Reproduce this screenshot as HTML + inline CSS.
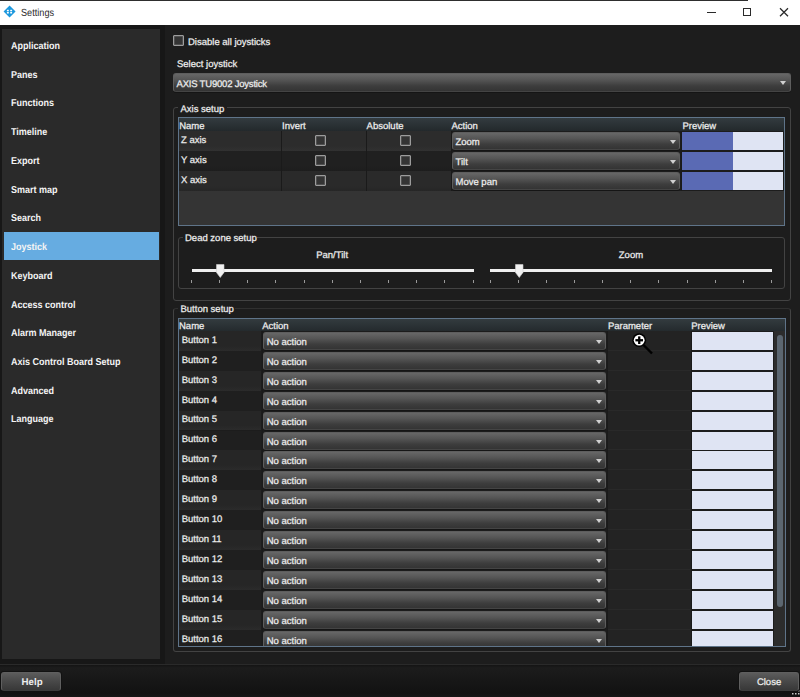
<!DOCTYPE html><html><head><meta charset="utf-8"><title>Settings</title><style>
*{margin:0;padding:0;box-sizing:border-box}
html,body{width:800px;height:697px;overflow:hidden;background:#1d1d1d;font-family:"Liberation Sans",sans-serif;text-rendering:geometricPrecision}
.a{position:absolute}
.t{position:absolute;white-space:nowrap;font-size:9.5px;line-height:12px;color:#ededed;-webkit-text-stroke-width:0.25px}
.sb{position:absolute;white-space:nowrap;font-size:10px;line-height:12px;color:#f4f4f4;font-weight:bold;transform:scaleX(.9);transform-origin:0 0}
.cb{position:absolute;width:11px;height:11px;border:1px solid #9c9c9c;background:#343434;border-radius:1px;box-shadow:inset 0 0 0 0.5px #6a6a6a}
.dd{position:absolute;border:1px solid #5e5e5e;border-bottom-color:#444;border-radius:3px;background:linear-gradient(#676767,#555 35%,#3d3d3d 70%,#343434);box-shadow:0 1px 0 #151515}
.dd .arr{position:absolute;width:0;height:0;border-left:3px solid transparent;border-right:3px solid transparent;border-top:4px solid #d0d0d0}
.grp{position:absolute;border:1px solid #434343;border-radius:3px}
.tbl{position:absolute;border:1px solid #5f7489;overflow:hidden}
.hdr{position:absolute;left:0;right:0;top:0;height:13px;background:linear-gradient(#333b3f,#23292c)}
.btn{position:absolute;border:1px solid #5f5f5f;border-bottom-color:#3c3c3c;border-radius:3px;background:linear-gradient(#5c5c5c,#4a4a4a 45%,#383838);box-shadow:0 0 0 1px #121212}
</style></head><body>
<div class="a" style="left:0;top:0;width:800px;height:25px;background:#fff"></div>
<div class="a" style="left:0;top:0;width:748px;height:1px;background:#2e2e2e"></div>
<svg class="a" style="left:3px;top:5px" width="13" height="13" viewBox="0 0 13 13"><path d="M6.55 0.55 L12.55 6.55 L6.55 12.55 L0.55 6.55Z" fill="#1b98de"/><g fill="#fff"><rect x="3.9" y="4.8" width="1.9" height="1.5"/><rect x="7.2" y="4.8" width="1.9" height="1.5"/><rect x="3.9" y="7.0" width="1.9" height="1.5"/><rect x="7.2" y="7.0" width="1.9" height="1.5"/></g></svg>
<div class="t" style="left:20.5px;top:8.00px;color:#2a2a2a;font-size:10.3px;-webkit-text-stroke-width:0;transform:scaleX(.89);transform-origin:0 0">Settings</div>
<div class="a" style="left:707px;top:11.7px;width:8.5px;height:1.3px;background:#2a2a2a"></div>
<div class="a" style="left:743.3px;top:8.2px;width:8px;height:8px;border:1.2px solid #2a2a2a"></div>
<svg class="a" style="left:779px;top:7px" width="10" height="10" viewBox="0 0 10 10"><path d="M1 1.2L9 9.2M9 1.2L1 9.2" stroke="#2a2a2a" stroke-width="1.25"/></svg>
<div class="a" style="left:0;top:25px;width:165px;height:640px;background:#171717"></div>
<div class="a" style="left:2px;top:29px;width:158px;height:630px;background:#2a2a2a"></div>
<div class="a" style="left:4px;top:232.4px;width:155px;height:27.6px;background:#66ace1"></div>
<div class="sb" style="left:11px;top:41.00px;">Application</div>
<div class="sb" style="left:11px;top:69.73px;">Panes</div>
<div class="sb" style="left:11px;top:98.46px;">Functions</div>
<div class="sb" style="left:11px;top:127.19px;">Timeline</div>
<div class="sb" style="left:11px;top:155.92px;">Export</div>
<div class="sb" style="left:11px;top:184.65px;">Smart map</div>
<div class="sb" style="left:11px;top:213.38px;">Search</div>
<div class="sb" style="left:11px;top:242.11px;">Joystick</div>
<div class="sb" style="left:11px;top:270.84px;">Keyboard</div>
<div class="sb" style="left:11px;top:299.57px;">Access control</div>
<div class="sb" style="left:11px;top:328.30px;">Alarm Manager</div>
<div class="sb" style="left:11px;top:357.03px;">Axis Control Board Setup</div>
<div class="sb" style="left:11px;top:385.76px;">Advanced</div>
<div class="sb" style="left:11px;top:414.49px;">Language</div>
<div class="cb" style="left:173px;top:35px"></div>
<div class="t" style="left:188px;top:36.60px;">Disable all joysticks</div>
<div class="t" style="left:177px;top:59.10px;">Select joystick</div>
<div class="dd" style="left:173px;top:73px;width:618px;height:19px"><div class="arr" style="left:606px;top:7px"></div></div>
<div class="t" style="left:176.5px;top:78.50px;letter-spacing:-0.2px">AXIS TU9002 Joystick</div>
<div class="grp" style="left:173px;top:107px;width:617.5px;height:194px"></div>
<div class="a" style="left:178px;top:104px;width:49px;height:6px;background:#1d1d1d"></div>
<div class="t" style="left:180.5px;top:103.80px;">Axis setup</div>
<div class="tbl" style="left:178px;top:117px;width:607px;height:108.5px;background:#343434">
<div class="hdr"></div>
<div class="a" style="left:0;top:13px;width:606px;height:20px;background:linear-gradient(#2c2c2c 75%,#313131)"></div>
<div class="a" style="left:0;top:33px;width:606px;height:20px;background:linear-gradient(#202020 75%,#1d1d1d)"></div>
<div class="a" style="left:0;top:53px;width:606px;height:20px;background:linear-gradient(#2a2a2a 75%,#262626)"></div>
<div class="a" style="left:272px;top:13px;width:334px;height:60px;background:#1c1c1c"></div>
<div class="a" style="left:102px;top:13px;width:1px;height:60px;background:#1a1a1a"></div>
<div class="a" style="left:187px;top:13px;width:1px;height:60px;background:#1a1a1a"></div>
<div class="a" style="left:272px;top:13px;width:1px;height:60px;background:#1a1a1a"></div>
<div class="a" style="left:502px;top:13px;width:1px;height:60px;background:#1a1a1a"></div>
</div>
<div class="t" style="left:179.2px;top:120.80px;">Name</div>
<div class="t" style="left:282px;top:120.80px;">Invert</div>
<div class="t" style="left:366.6px;top:120.80px;">Absolute</div>
<div class="t" style="left:451.5px;top:120.80px;">Action</div>
<div class="t" style="left:682.4px;top:120.80px;">Preview</div>
<div class="t" style="left:181px;top:134.70px;">Z axis</div>
<div class="cb" style="left:315px;top:135px"></div>
<div class="cb" style="left:400px;top:135px"></div>
<div class="dd" style="left:452px;top:132px;width:228px;height:18px"><div class="arr" style="left:217px;top:7px"></div></div>
<div class="t" style="left:455.5px;top:136.70px;">Zoom</div>
<div class="a" style="left:682px;top:132px;width:101px;height:18px;background:#dfe4f3"><div class="a" style="left:0;top:0;width:51px;height:18px;background:#5a6ab4"></div></div>
<div class="t" style="left:181px;top:154.70px;">Y axis</div>
<div class="cb" style="left:315px;top:155px"></div>
<div class="cb" style="left:400px;top:155px"></div>
<div class="dd" style="left:452px;top:152px;width:228px;height:18px"><div class="arr" style="left:217px;top:7px"></div></div>
<div class="t" style="left:455.5px;top:156.70px;">Tilt</div>
<div class="a" style="left:682px;top:152px;width:101px;height:18px;background:#dfe4f3"><div class="a" style="left:0;top:0;width:51px;height:18px;background:#5a6ab4"></div></div>
<div class="t" style="left:181px;top:174.70px;">X axis</div>
<div class="cb" style="left:315px;top:175px"></div>
<div class="cb" style="left:400px;top:175px"></div>
<div class="dd" style="left:452px;top:172px;width:228px;height:18px"><div class="arr" style="left:217px;top:7px"></div></div>
<div class="t" style="left:455.5px;top:176.70px;">Move pan</div>
<div class="a" style="left:682px;top:172px;width:101px;height:18px;background:#dfe4f3"><div class="a" style="left:0;top:0;width:51px;height:18px;background:#5a6ab4"></div></div>
<div class="grp" style="left:178px;top:237px;width:607px;height:52px"></div>
<div class="a" style="left:183px;top:234px;width:74px;height:6px;background:#1d1d1d"></div>
<div class="t" style="left:185px;top:232.80px;">Dead zone setup</div>
<div class="t" style="left:316.2px;top:250.00px;">Pan/Tilt</div>
<div class="t" style="left:618.8px;top:250.00px;">Zoom</div>
<div class="a" style="left:191.5px;top:269px;width:282px;height:3px;background:#efefef"></div>
<div class="a" style="left:191.00px;top:280px;width:1px;height:3px;background:#9a9a9a"></div>
<div class="a" style="left:219.15px;top:280px;width:1px;height:3px;background:#9a9a9a"></div>
<div class="a" style="left:247.30px;top:280px;width:1px;height:3px;background:#9a9a9a"></div>
<div class="a" style="left:275.45px;top:280px;width:1px;height:3px;background:#9a9a9a"></div>
<div class="a" style="left:303.60px;top:280px;width:1px;height:3px;background:#9a9a9a"></div>
<div class="a" style="left:331.75px;top:280px;width:1px;height:3px;background:#9a9a9a"></div>
<div class="a" style="left:359.90px;top:280px;width:1px;height:3px;background:#9a9a9a"></div>
<div class="a" style="left:388.05px;top:280px;width:1px;height:3px;background:#9a9a9a"></div>
<div class="a" style="left:416.20px;top:280px;width:1px;height:3px;background:#9a9a9a"></div>
<div class="a" style="left:444.35px;top:280px;width:1px;height:3px;background:#9a9a9a"></div>
<div class="a" style="left:472.50px;top:280px;width:1px;height:3px;background:#9a9a9a"></div>
<svg class="a" style="left:216px;top:264px" width="9" height="14" viewBox="0 0 9 14"><path d="M0.5 0.5H8V8.5L4.25 13.5L0.5 8.5Z" fill="#f0f0f0" stroke="#cfcfcf" stroke-width="0.6"/></svg>
<div class="a" style="left:490px;top:269px;width:282px;height:3px;background:#efefef"></div>
<div class="a" style="left:489.50px;top:280px;width:1px;height:3px;background:#9a9a9a"></div>
<div class="a" style="left:517.65px;top:280px;width:1px;height:3px;background:#9a9a9a"></div>
<div class="a" style="left:545.80px;top:280px;width:1px;height:3px;background:#9a9a9a"></div>
<div class="a" style="left:573.95px;top:280px;width:1px;height:3px;background:#9a9a9a"></div>
<div class="a" style="left:602.10px;top:280px;width:1px;height:3px;background:#9a9a9a"></div>
<div class="a" style="left:630.25px;top:280px;width:1px;height:3px;background:#9a9a9a"></div>
<div class="a" style="left:658.40px;top:280px;width:1px;height:3px;background:#9a9a9a"></div>
<div class="a" style="left:686.55px;top:280px;width:1px;height:3px;background:#9a9a9a"></div>
<div class="a" style="left:714.70px;top:280px;width:1px;height:3px;background:#9a9a9a"></div>
<div class="a" style="left:742.85px;top:280px;width:1px;height:3px;background:#9a9a9a"></div>
<div class="a" style="left:771.00px;top:280px;width:1px;height:3px;background:#9a9a9a"></div>
<svg class="a" style="left:514.75px;top:264px" width="9" height="14" viewBox="0 0 9 14"><path d="M0.5 0.5H8V8.5L4.25 13.5L0.5 8.5Z" fill="#f0f0f0" stroke="#cfcfcf" stroke-width="0.6"/></svg>
<div class="grp" style="left:173px;top:307.5px;width:617.5px;height:344.5px;border-top-color:#303030"></div>
<div class="a" style="left:178px;top:304px;width:57px;height:6px;background:#1d1d1d"></div>
<div class="t" style="left:180.5px;top:304.00px;">Button setup</div>
<div class="tbl" style="left:178px;top:318px;width:608px;height:329px;background:#2b2b2b">
<div class="hdr"></div>
</div>
<div class="t" style="left:179px;top:320.80px;">Name</div>
<div class="t" style="left:262.2px;top:320.80px;">Action</div>
<div class="t" style="left:607.9px;top:320.80px;">Parameter</div>
<div class="t" style="left:691.2px;top:320.80px;">Preview</div>
<div class="a" style="left:179px;top:331px;width:606px;height:315px;overflow:hidden">
<div class="a" style="left:0;top:0;width:595px;height:320px;background:#1c1c1c"></div>
<div class="a" style="left:428.5px;top:0;width:83px;height:320px;background:#232323"></div>
<div class="a" style="left:0;top:-0.20px;width:82px;height:19.94px;background:linear-gradient(#262626 75%,#2b2b2b)"></div>
<div class="a" style="left:428.5px;top:18.74px;width:83px;height:1px;background:#292929"></div>
<div class="a" style="left:0;top:19.74px;width:82px;height:19.94px;background:#1f1f1f"></div>
<div class="a" style="left:428.5px;top:38.68px;width:83px;height:1px;background:#292929"></div>
<div class="a" style="left:0;top:39.68px;width:82px;height:19.94px;background:linear-gradient(#262626 75%,#2b2b2b)"></div>
<div class="a" style="left:428.5px;top:58.62px;width:83px;height:1px;background:#292929"></div>
<div class="a" style="left:0;top:59.62px;width:82px;height:19.94px;background:#1f1f1f"></div>
<div class="a" style="left:428.5px;top:78.56px;width:83px;height:1px;background:#292929"></div>
<div class="a" style="left:0;top:79.56px;width:82px;height:19.94px;background:linear-gradient(#262626 75%,#2b2b2b)"></div>
<div class="a" style="left:428.5px;top:98.50px;width:83px;height:1px;background:#292929"></div>
<div class="a" style="left:0;top:99.50px;width:82px;height:19.94px;background:#1f1f1f"></div>
<div class="a" style="left:428.5px;top:118.44px;width:83px;height:1px;background:#292929"></div>
<div class="a" style="left:0;top:119.44px;width:82px;height:19.94px;background:linear-gradient(#262626 75%,#2b2b2b)"></div>
<div class="a" style="left:428.5px;top:138.38px;width:83px;height:1px;background:#292929"></div>
<div class="a" style="left:0;top:139.38px;width:82px;height:19.94px;background:#1f1f1f"></div>
<div class="a" style="left:428.5px;top:158.32px;width:83px;height:1px;background:#292929"></div>
<div class="a" style="left:0;top:159.32px;width:82px;height:19.94px;background:linear-gradient(#262626 75%,#2b2b2b)"></div>
<div class="a" style="left:428.5px;top:178.26px;width:83px;height:1px;background:#292929"></div>
<div class="a" style="left:0;top:179.26px;width:82px;height:19.94px;background:#1f1f1f"></div>
<div class="a" style="left:428.5px;top:198.20px;width:83px;height:1px;background:#292929"></div>
<div class="a" style="left:0;top:199.20px;width:82px;height:19.94px;background:linear-gradient(#262626 75%,#2b2b2b)"></div>
<div class="a" style="left:428.5px;top:218.14px;width:83px;height:1px;background:#292929"></div>
<div class="a" style="left:0;top:219.14px;width:82px;height:19.94px;background:#1f1f1f"></div>
<div class="a" style="left:428.5px;top:238.08px;width:83px;height:1px;background:#292929"></div>
<div class="a" style="left:0;top:239.08px;width:82px;height:19.94px;background:linear-gradient(#262626 75%,#2b2b2b)"></div>
<div class="a" style="left:428.5px;top:258.02px;width:83px;height:1px;background:#292929"></div>
<div class="a" style="left:0;top:259.02px;width:82px;height:19.94px;background:#1f1f1f"></div>
<div class="a" style="left:428.5px;top:277.96px;width:83px;height:1px;background:#292929"></div>
<div class="a" style="left:0;top:278.96px;width:82px;height:19.94px;background:linear-gradient(#262626 75%,#2b2b2b)"></div>
<div class="a" style="left:428.5px;top:297.90px;width:83px;height:1px;background:#292929"></div>
<div class="a" style="left:0;top:298.90px;width:82px;height:19.94px;background:#1f1f1f"></div>
<div class="a" style="left:428.5px;top:317.84px;width:83px;height:1px;background:#292929"></div>
<div class="a" style="left:82.5px;top:0;width:1px;height:320px;background:#1a1a1a"></div>
<div class="a" style="left:428px;top:0;width:1px;height:320px;background:#1a1a1a"></div>
<div class="a" style="left:511.5px;top:0;width:1px;height:320px;background:#1a1a1a"></div>
<div class="a" style="left:595px;top:0;width:11px;height:320px;background:#2c2c2c"></div>
<div class="a" style="left:598px;top:4px;width:6px;height:272px;background:#5b6670;border-radius:3px"></div>
<div class="t" style="left:2.7px;top:3.70px;">Button 1</div>
<div class="dd" style="left:84px;top:0.80px;width:343px;height:18px"><div class="arr" style="left:332px;top:7px"></div></div>
<div class="t" style="left:87.7px;top:5.80px;">No action</div>
<div class="a" style="left:512.5px;top:0.80px;width:81.5px;height:18px;background:#dfe4f3"></div>
<div class="t" style="left:2.7px;top:23.64px;">Button 2</div>
<div class="dd" style="left:84px;top:20.74px;width:343px;height:18px"><div class="arr" style="left:332px;top:7px"></div></div>
<div class="t" style="left:87.7px;top:25.74px;">No action</div>
<div class="a" style="left:512.5px;top:20.74px;width:81.5px;height:18px;background:#dfe4f3"></div>
<div class="t" style="left:2.7px;top:43.58px;">Button 3</div>
<div class="dd" style="left:84px;top:40.68px;width:343px;height:18px"><div class="arr" style="left:332px;top:7px"></div></div>
<div class="t" style="left:87.7px;top:45.68px;">No action</div>
<div class="a" style="left:512.5px;top:40.68px;width:81.5px;height:18px;background:#dfe4f3"></div>
<div class="t" style="left:2.7px;top:63.52px;">Button 4</div>
<div class="dd" style="left:84px;top:60.62px;width:343px;height:18px"><div class="arr" style="left:332px;top:7px"></div></div>
<div class="t" style="left:87.7px;top:65.62px;">No action</div>
<div class="a" style="left:512.5px;top:60.62px;width:81.5px;height:18px;background:#dfe4f3"></div>
<div class="t" style="left:2.7px;top:83.46px;">Button 5</div>
<div class="dd" style="left:84px;top:80.56px;width:343px;height:18px"><div class="arr" style="left:332px;top:7px"></div></div>
<div class="t" style="left:87.7px;top:85.56px;">No action</div>
<div class="a" style="left:512.5px;top:80.56px;width:81.5px;height:18px;background:#dfe4f3"></div>
<div class="t" style="left:2.7px;top:103.40px;">Button 6</div>
<div class="dd" style="left:84px;top:100.50px;width:343px;height:18px"><div class="arr" style="left:332px;top:7px"></div></div>
<div class="t" style="left:87.7px;top:105.50px;">No action</div>
<div class="a" style="left:512.5px;top:100.50px;width:81.5px;height:18px;background:#dfe4f3"></div>
<div class="t" style="left:2.7px;top:123.34px;">Button 7</div>
<div class="dd" style="left:84px;top:120.44px;width:343px;height:18px"><div class="arr" style="left:332px;top:7px"></div></div>
<div class="t" style="left:87.7px;top:125.44px;">No action</div>
<div class="a" style="left:512.5px;top:120.44px;width:81.5px;height:18px;background:#dfe4f3"></div>
<div class="t" style="left:2.7px;top:143.28px;">Button 8</div>
<div class="dd" style="left:84px;top:140.38px;width:343px;height:18px"><div class="arr" style="left:332px;top:7px"></div></div>
<div class="t" style="left:87.7px;top:145.38px;">No action</div>
<div class="a" style="left:512.5px;top:140.38px;width:81.5px;height:18px;background:#dfe4f3"></div>
<div class="t" style="left:2.7px;top:163.22px;">Button 9</div>
<div class="dd" style="left:84px;top:160.32px;width:343px;height:18px"><div class="arr" style="left:332px;top:7px"></div></div>
<div class="t" style="left:87.7px;top:165.32px;">No action</div>
<div class="a" style="left:512.5px;top:160.32px;width:81.5px;height:18px;background:#dfe4f3"></div>
<div class="t" style="left:2.7px;top:183.16px;">Button 10</div>
<div class="dd" style="left:84px;top:180.26px;width:343px;height:18px"><div class="arr" style="left:332px;top:7px"></div></div>
<div class="t" style="left:87.7px;top:185.26px;">No action</div>
<div class="a" style="left:512.5px;top:180.26px;width:81.5px;height:18px;background:#dfe4f3"></div>
<div class="t" style="left:2.7px;top:203.10px;">Button 11</div>
<div class="dd" style="left:84px;top:200.20px;width:343px;height:18px"><div class="arr" style="left:332px;top:7px"></div></div>
<div class="t" style="left:87.7px;top:205.20px;">No action</div>
<div class="a" style="left:512.5px;top:200.20px;width:81.5px;height:18px;background:#dfe4f3"></div>
<div class="t" style="left:2.7px;top:223.04px;">Button 12</div>
<div class="dd" style="left:84px;top:220.14px;width:343px;height:18px"><div class="arr" style="left:332px;top:7px"></div></div>
<div class="t" style="left:87.7px;top:225.14px;">No action</div>
<div class="a" style="left:512.5px;top:220.14px;width:81.5px;height:18px;background:#dfe4f3"></div>
<div class="t" style="left:2.7px;top:242.98px;">Button 13</div>
<div class="dd" style="left:84px;top:240.08px;width:343px;height:18px"><div class="arr" style="left:332px;top:7px"></div></div>
<div class="t" style="left:87.7px;top:245.08px;">No action</div>
<div class="a" style="left:512.5px;top:240.08px;width:81.5px;height:18px;background:#dfe4f3"></div>
<div class="t" style="left:2.7px;top:262.92px;">Button 14</div>
<div class="dd" style="left:84px;top:260.02px;width:343px;height:18px"><div class="arr" style="left:332px;top:7px"></div></div>
<div class="t" style="left:87.7px;top:265.02px;">No action</div>
<div class="a" style="left:512.5px;top:260.02px;width:81.5px;height:18px;background:#dfe4f3"></div>
<div class="t" style="left:2.7px;top:282.86px;">Button 15</div>
<div class="dd" style="left:84px;top:279.96px;width:343px;height:18px"><div class="arr" style="left:332px;top:7px"></div></div>
<div class="t" style="left:87.7px;top:284.96px;">No action</div>
<div class="a" style="left:512.5px;top:279.96px;width:81.5px;height:18px;background:#dfe4f3"></div>
<div class="t" style="left:2.7px;top:302.80px;">Button 16</div>
<div class="dd" style="left:84px;top:299.90px;width:343px;height:18px"><div class="arr" style="left:332px;top:7px"></div></div>
<div class="t" style="left:87.7px;top:304.90px;">No action</div>
<div class="a" style="left:512.5px;top:299.90px;width:81.5px;height:18px;background:#dfe4f3"></div>
</div>
<svg class="a" style="left:630px;top:331px" width="26" height="26" viewBox="0 0 26 26"><path d="M13.5 14 L22 22.5" stroke="#000" stroke-width="2.4"/><circle cx="9.2" cy="9.2" r="6.9" fill="#000"/><circle cx="9.2" cy="9.2" r="5.4" fill="#fff"/><rect x="8.1" y="5.4" width="2.3" height="7.6" fill="#000"/><rect x="5.4" y="8.1" width="7.6" height="2.3" fill="#000"/></svg>
<div class="a" style="left:0;top:664px;width:800px;height:1px;background:#2a2a2a"></div>
<div class="a" style="left:0;top:665px;width:800px;height:32px;background:linear-gradient(#141414,#1c1c1c 3px,#191919 10px,#121212 28px,#161616)"></div>
<svg class="a" style="left:790px;top:686px" width="10" height="11" viewBox="0 0 10 11"><g fill="#c8c8c8"><rect x="8" y="1" width="1.5" height="1.5"/><rect x="5" y="4" width="1.5" height="1.5"/><rect x="8" y="4" width="1.5" height="1.5"/><rect x="2" y="7" width="1.5" height="1.5"/><rect x="5" y="7" width="1.5" height="1.5"/><rect x="8" y="7" width="1.5" height="1.5"/></g></svg>
<div class="btn" style="left:1px;top:672px;width:60px;height:18.5px"></div>
<div class="t" style="left:21.6px;top:676.90px;font-weight:bold;-webkit-text-stroke-width:0;font-size:9.7px">Help</div>
<div class="btn" style="left:738.5px;top:672px;width:60px;height:18.5px"></div>
<div class="t" style="left:756.9px;top:676.90px;">Close</div>
</body></html>
